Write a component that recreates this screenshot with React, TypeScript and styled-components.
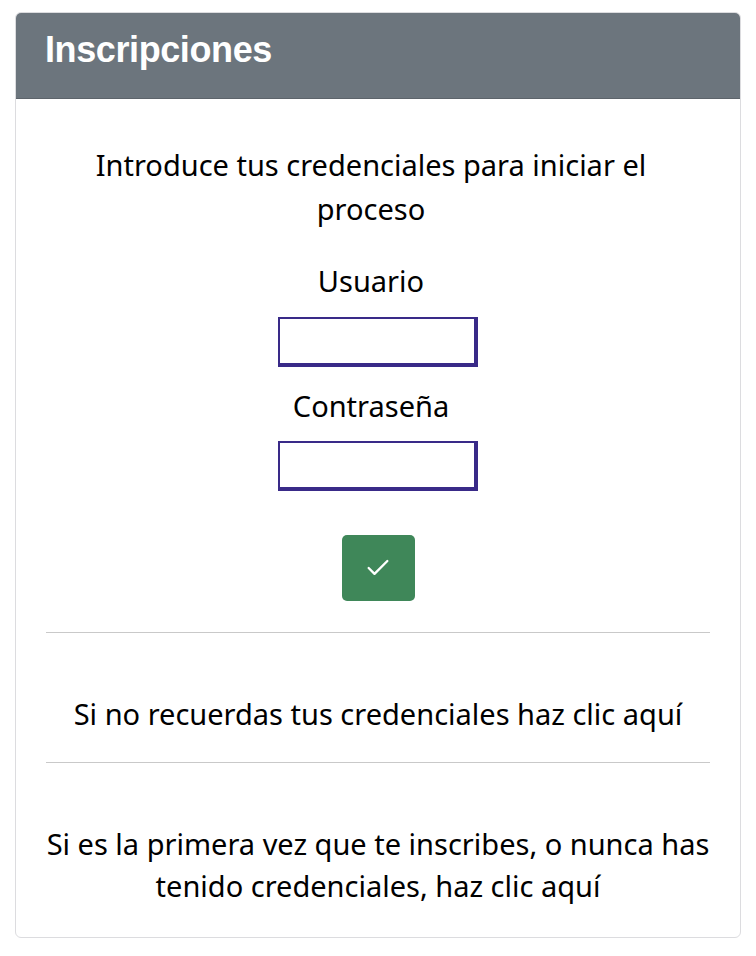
import React from 'react';
import styled, { createGlobalStyle } from 'styled-components';
import { Check } from 'lucide-react';

const GlobalStyles = createGlobalStyle`
  body {
    margin: 0;
    background: #fff;
    font-family: "Noto Sans", "Open Sans", sans-serif;
    color: #000;
  }
`;

const Page = styled.div`
  padding: 12px 15px 18px 15px;
`;

const Card = styled.div`
  border: 1px solid #dcdcdf;
  border-radius: 6px;
  overflow: hidden;
  background: #fff;
`;

const Header = styled.div`
  background: #6c757d;
  border-bottom: 1px solid #5d646b;
  height: 86px;
  padding: 0 29px 12px 29px;
  display: flex;
  align-items: center;
  box-sizing: border-box;
`;

const Title = styled.h1`
  margin: 0;
  color: #fff;
  font-family: "Liberation Sans", Arial, sans-serif;
  font-weight: 700;
  font-size: 36px;
  letter-spacing: -0.4px;
`;

const Body = styled.div`
  padding: 0 29px 30px 29px;
  display: flex;
  flex-direction: column;
  align-items: center;
  text-align: center;
`;

const Text = styled.p<{ $top?: number; $lh?: number; $shift?: number }>`
  margin: ${(p) => p.$top ?? 0}px -8px 0 -8px;
  font-size: 29px;
  line-height: ${(p) => p.$lh ?? 43}px;
  padding-right: ${(p) => p.$shift ?? 0}px;
  align-self: stretch;
  box-sizing: border-box;
`;

const Intro = styled(Text)`
  max-width: 600px;
  align-self: center;
`;

const Field = styled.input<{ $top: number }>`
  margin-top: ${(p) => p.$top}px;
  width: 200px;
  height: 50px;
  box-sizing: border-box;
  border: 2px solid #392a88;
  border-right-width: 4px;
  border-bottom-width: 4px;
  background: #fff;
  outline: none;
  font-size: 18px;
  padding: 0 8px;
`;

const Submit = styled.button`
  margin-top: 44px;
  width: 73px;
  height: 66px;
  padding: 0;
  border: none;
  border-radius: 5px;
  background: #3f8759;
  color: #fff;
  display: flex;
  align-items: center;
  justify-content: center;
  cursor: pointer;
`;

const Rule = styled.hr<{ $top: number }>`
  align-self: stretch;
  margin: ${(p) => p.$top}px 1px 0 1px;
  border: none;
  border-top: 1px solid #c9c9c9;
  height: 0;
`;

export default function App() {
  return (
    <>
      <GlobalStyles />
      <Page>
        <Card>
          <Header>
            <Title>Inscripciones</Title>
          </Header>
          <Body>
            <Intro $top={44} $lh={44} $shift={14}>
              Introduce tus credenciales para iniciar el proceso
            </Intro>
            <Text $top={28} $shift={14}>Usuario</Text>
            <Field $top={15} type="text" />
            <Text $top={17} $shift={14}>Contraseña</Text>
            <Field $top={14} type="password" />
            <Submit type="submit">
              <Check size={28} strokeWidth={2} />
            </Submit>
            <Rule $top={31} />
            <Text $top={59}>Si no recuerdas tus credenciales haz clic aquí</Text>
            <Rule $top={27} />
            <Text $top={60} $lh={42}>
              Si es la primera vez que te inscribes, o nunca has tenido credenciales, haz clic aquí
            </Text>
          </Body>
        </Card>
      </Page>
    </>
  );
}
